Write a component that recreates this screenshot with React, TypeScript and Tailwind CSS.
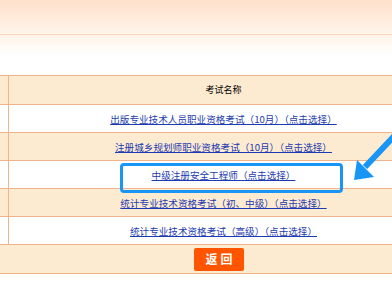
import React from 'react';

const exams = [
  '出版专业技术人员职业资格考试（10月）（点击选择）',
  '注册城乡规划师职业资格考试（10月）（点击选择）',
  '中级注册安全工程师（点击选择）',
  '统计专业技术资格考试（初、中级）（点击选择）',
  '统计专业技术资格考试（高级）（点击选择）',
];

const font = { fontFamily: '"Noto Sans CJK SC", "Noto Sans", sans-serif' };

export default function App() {
  return (
    <div className="relative w-[392px] h-[294px] overflow-hidden bg-white" style={font}>
      {/* page header bands */}
      <div className="h-[34px] bg-gradient-to-b from-[#fde0c9] to-[#fef4ea]" />
      <div className="h-px bg-[#fad7bc]" />
      <div className="h-[40px] bg-gradient-to-b from-[#fff4e8] via-white to-white" />

      {/* exam table */}
      <div className="w-[438px] border-t border-[#efb48c]">
        <div className="flex h-[29px] bg-[#fdebd1] border-b border-[#efb48c]">
          <div className="w-[9px] border-r border-[#efb48c]" />
          <div className="flex-1 flex items-center justify-center text-[9px] font-normal text-black">
            考试名称
          </div>
        </div>
        {exams.map((name, i) => (
          <div
            key={name}
            className={`flex h-[28px] border-b border-[#efb48c] ${i % 2 === 0 ? 'bg-white' : 'bg-[#fdebd1]'}`}
          >
            <div className="w-[9px] border-r border-[#efb48c]" />
            <div className="flex-1 flex items-center justify-center">
              <a href="#" className="text-[9.6px] leading-[12px] text-[#1d3bb0] underline underline-offset-1">
                {name}
              </a>
            </div>
          </div>
        ))}
        <div className="h-[29px] bg-[#fdebd1] border-b border-[#efb48c] flex items-center justify-center">
          <button className="w-[50px] h-[23px] rounded-[2px] bg-[#ff5500] text-white text-[12px] font-bold tracking-[3px] pl-[3px]">
            返回
          </button>
        </div>
      </div>

      {/* highlight annotation */}
      <div className="absolute left-[120px] top-[163px] w-[223px] h-[30px] border-[3px] border-[#1896f5] rounded-[4px]" />
      <svg className="absolute left-[350px] top-[130px]" width="42" height="54" viewBox="0 0 42 54">
        <path d="M46 4 L15 37" stroke="#1896f5" strokeWidth="6" />
        <path d="M4 50 L7 30 L24 47 Z" fill="#1896f5" />
      </svg>
    </div>
  );
}
